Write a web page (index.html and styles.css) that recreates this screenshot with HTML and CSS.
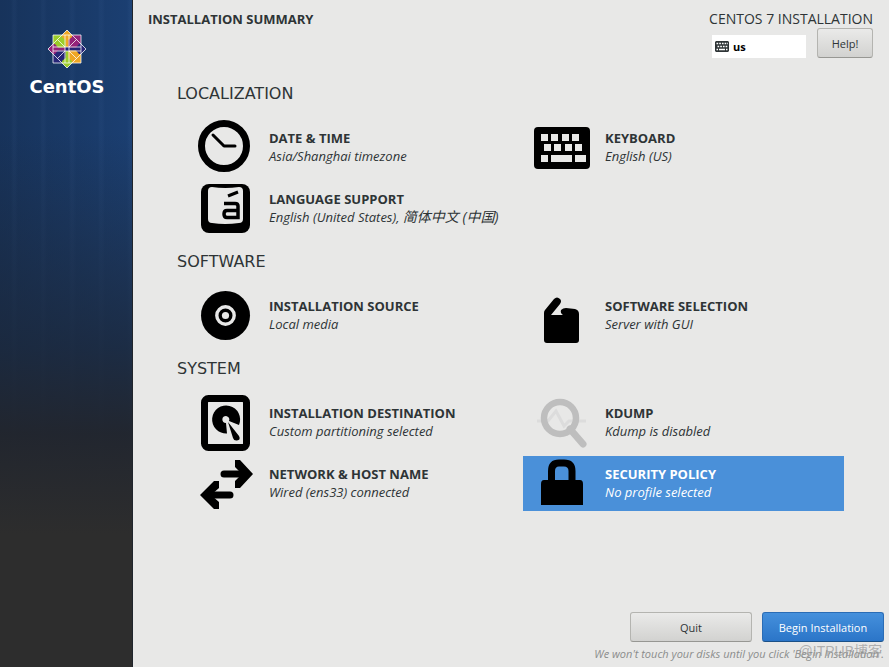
FILE: index.html
```html
<!DOCTYPE html>
<html lang="en">
<head>
<meta charset="utf-8">
<title>Installation Summary</title>
<link rel="stylesheet" href="styles.css">
</head>
<body>
<div class="installer">
  <aside class="sidebar">
    <svg class="logo-mark" viewBox="0 0 40 40" aria-hidden="true">
      <path fill="#9ccd2a" d="M6 6H20V20H6z"/>
      <path fill="#932279" d="M20 6H34V20H20z"/>
      <path fill="#efa724" d="M20 20H34V34H20z"/>
      <path fill="#262577" d="M6 20H20V34H6z"/>
      <path fill="#efa724" d="M20 1 25 6V8L21.500 11V18H18.500V11L15 8V6z"/>
      <path fill="#262577" d="M39 20 34 25H32L29 21.500H22V18.500H29L32 15H34z"/>
      <path fill="#9ccd2a" d="M20 39 15 34V32L18.500 29V22H21.500V29L25 32V34z"/>
      <path fill="#932279" d="M1 20 6 15H8L11 18.500H18V21.500H11L8 25H6z"/>
      <g fill="none" stroke="#fff" stroke-opacity=".85" stroke-width=".9">
        <path d="M6 6H34V34H6zM20 1 39 20 20 39 1 20z"/>
        <path d="M18 6V18H6M22 6V18H34M18 34V22H6M22 34V22H34"/>
        <path d="M10.500 10.500 18 18M29.500 10.500 22 18M10.500 29.500 18 22M29.500 29.500 22 22"/>
      </g>
      <path fill="#262577" stroke="#fff" stroke-width=".8" d="M18 18H22V22H18z"/>
    </svg>
    <span class="logo-name">CentOS</span>
  </aside>
  <main class="main">
    <header class="header">
      <h1>INSTALLATION SUMMARY</h1>
      <div class="header-side">
        <span class="product">CENTOS 7 INSTALLATION</span>
        <div class="header-tools">
          <button class="layout" type="button">
            <svg viewBox="0 0 14 11" aria-hidden="true"><path fill="#2e3436" d="M1 0H13L14 1V10L13 11H1L0 10V1z"/><path stroke="#fff" stroke-width="1.600" stroke-dasharray="1.700 1" d="M1.500 2.500H13M2.500 5.500H12.500"/><path stroke="#fff" stroke-width="1.600" d="M1.500 8.500H3M4 8.500H10M11 8.500H12.500"/></svg>
            us
          </button>
          <button class="btn help" type="button">Help!</button>
        </div>
      </div>
    </header>

    <div class="hub">
      <section>
        <h2>LOCALIZATION</h2>
        <div class="tiles">
          <button class="tile" type="button">
            <svg viewBox="0 0 64 56" aria-hidden="true"><circle cx="31" cy="26" r="22.500" fill="none" stroke="#000" stroke-width="7"/><path d="M20 15 31 26H42" fill="none" stroke="#000" stroke-width="3" stroke-linecap="round" stroke-linejoin="round"/></svg>
            <span class="label"><strong>DATE &amp; TIME</strong><em>Asia/Shanghai timezone</em></span>
          </button>
          <button class="tile" type="button">
            <svg viewBox="0 0 64 56" aria-hidden="true"><rect x="5" y="7" width="56" height="42" rx="4"/><path fill="#e8e8e7" d="M12 14h7v7h-7zM22 14h7v7h-7zM33 14h7v7h-7zM43 14h7v7h-7zM15 24h7v7h-7zM25 24h7v7h-7zM36 24h7v7h-7zM46 24h7v7h-7zM12 35h7v7h-7zM22 35h21v7H22zM46 35h11v7H46z"/></svg>
            <span class="label"><strong>KEYBOARD</strong><em>English (US)</em></span>
          </button>
          <button class="tile" type="button">
            <svg viewBox="0 0 64 56" aria-hidden="true"><rect x="8" y="3" width="49" height="49" rx="8"/><path fill="#e8e8e7" d="M19 6Q32 8 46 6Q50 6 50 10V38Q50 42 46 42Q32 44 19 42Q15 42 15 38V10Q15 6 19 6z"/><path d="M35 15 45 11" fill="none" stroke="#000" stroke-width="3"/><path d="M31 22.500H42Q45 22.500 45 25V36.500H34Q31 36.500 31 33Q31 29.500 34 29.500H45" fill="none" stroke="#000" stroke-width="3.500"/></svg>
            <span class="label"><strong>LANGUAGE SUPPORT</strong><em>English (United States), <span class="native" lang="zh-CN">简体中文 (中国)</span></em></span>
          </button>
        </div>
      </section>

      <section>
        <h2>SOFTWARE</h2>
        <div class="tiles">
          <button class="tile" type="button">
            <svg viewBox="0 0 64 56" aria-hidden="true"><circle cx="32.500" cy="27.500" r="24.500"/><circle cx="32.500" cy="27.500" r="8.700" fill="none" stroke="#e8e8e7" stroke-width="3.400"/><circle cx="32.500" cy="27.500" r="3.600" fill="#e8e8e7"/></svg>
            <span class="label"><strong>INSTALLATION SOURCE</strong><em>Local media</em></span>
          </button>
          <button class="tile" type="button">
            <svg viewBox="0 0 64 56" aria-hidden="true"><path d="M15 25Q15 23 16 22L25 11Q28 8 31 11Q33 13 31 16L22 27H34Q31 25 32 22Q34 20 37 20L46 21Q50 22 50 26V52Q50 55 47 55H18Q15 55 15 52z"/></svg>
            <span class="label"><strong>SOFTWARE SELECTION</strong><em>Server with GUI</em></span>
          </button>
        </div>
      </section>

      <section>
        <h2>SYSTEM</h2>
        <div class="tiles">
          <button class="tile" type="button">
            <svg viewBox="0 0 64 56" aria-hidden="true"><rect x="11.500" y="3.500" width="42" height="49" rx="4" fill="none" stroke="#000" stroke-width="7"/><path d="M34 38.500A14 14 0 1 1 46 30L36 26A3.500 3.500 0 1 0 33 28z"/><path d="M35 27 46 41Q48 45 44 45.500Q41 46 40 43z"/></svg>
            <span class="label"><strong>INSTALLATION DESTINATION</strong><em>Custom partitioning selected</em></span>
          </button>
          <button class="tile" type="button">
            <svg viewBox="0 0 64 56" aria-hidden="true"><path d="M8 26H19L27 16L35 31L40 26H57" fill="none" stroke="#dcdcdc" stroke-width="3"/><circle cx="31" cy="23" r="16" fill="none" stroke="#bebebe" stroke-width="6.500"/><path d="M41 34 54 49" stroke="#bebebe" stroke-width="7" stroke-linecap="round"/></svg>
            <span class="label"><strong>KDUMP</strong><em>Kdump is disabled</em></span>
          </button>
          <button class="tile" type="button">
            <svg viewBox="0 0 64 56" aria-hidden="true"><path d="M31 18H51M37 39H18" stroke="#000" stroke-width="7" stroke-linecap="round"/><path d="M42 4H47L60 18 47 32H42V25L49 18 42 11zM26 25H21L7 39 21 53H26V46L18 39 26 32z"/></svg>
            <span class="label"><strong>NETWORK &amp; HOST NAME</strong><em>Wired (ens33) connected</em></span>
          </button>
          <button class="tile selected" type="button">
            <svg viewBox="0 0 64 56" aria-hidden="true"><path d="M22.500 28V15Q22.500 7 30 7H35Q43 7 43 15V28" fill="none" stroke="#000" stroke-width="7"/><path d="M12 49V28Q12 24 15 24H51Q54 24 54 28V49z"/></svg>
            <span class="label"><strong>SECURITY POLICY</strong><em>No profile selected</em></span>
          </button>
        </div>
      </section>
    </div>

    <footer class="footer">
      <div class="actions">
        <button class="btn" type="button">Quit</button>
        <button class="btn primary" type="button">Begin Installation</button>
      </div>
      <p class="note">We won't touch your disks until you click 'Begin Installation'.</p>
      <span class="watermark">@ITPUB博客</span>
    </footer>
  </main>
</div>
</body>
</html>
```
FILE: styles.css
```css
* {
  box-sizing: border-box;
}

body {
  margin: 0;
  background: #e8e8e7;
  color: #2e3436;
  font-family: "Open Sans", "Noto Sans", "Noto Sans CJK SC", sans-serif;
  font-size: 13px;
}

button {
  font: inherit;
  color: inherit;
}

.installer {
  display: flex;
  min-height: 100vh;
}

.sidebar {
  flex: none;
  width: 133px;
  padding: 29px 0 0 2px;
  display: flex;
  flex-direction: column;
  align-items: center;
  border-right: 1px solid #20252c;
  background:
    linear-gradient(180deg, transparent 20%, rgba(28, 38, 54, 0.75) 52%, rgba(34, 37, 44, 0.95) 65%, #2d2d2d 80%),
    repeating-linear-gradient(90deg, transparent 0 11px, rgba(120, 160, 220, 0.04) 13px 15px, transparent 18px 29px),
    linear-gradient(90deg, #17335b, #1b3f72);
}

.logo-mark {
  width: 40px;
  height: 40px;
}

.logo-name {
  margin-top: 6px;
  color: #fff;
  font-family: "DejaVu Sans", sans-serif;
  font-size: 18px;
  font-weight: bold;
  line-height: 24px;
}

.main {
  flex: 1;
  min-width: 0;
  display: flex;
  flex-direction: column;
}

.header {
  display: flex;
  justify-content: space-between;
  padding: 10px 16px 0 15px;
}

.header h1 {
  margin: 0;
  font-size: 13px;
  font-weight: 700;
  line-height: 18px;
}

.header-side {
  display: flex;
  flex-direction: column;
}

.product {
  font-size: 14px;
  line-height: 18px;
}

.header-tools {
  display: flex;
  justify-content: flex-end;
  align-items: flex-end;
  gap: 11px;
}

.layout {
  display: flex;
  align-items: center;
  gap: 4px;
  width: 94px;
  height: 23px;
  padding: 0 3px;
  border: 0;
  background: #fff;
  color: #000;
  font-size: 11px;
  font-weight: bold;
}

.layout svg {
  width: 14px;
  height: 11px;
}

.btn {
  width: 122px;
  height: 30px;
  padding: 0;
  border: 1px solid #b4b4b0;
  border-bottom-color: #979793;
  border-radius: 3px;
  background: linear-gradient(#eaeae9, #d2d2d0);
  font-size: 11px;
}

.btn.help {
  width: 56px;
}

.btn.primary {
  border-color: #2a6cb5;
  border-bottom-color: #1c5187;
  background: linear-gradient(#4590dc, #2b75c8);
  color: #fff;
}

.hub {
  flex: 1;
  display: flex;
  flex-direction: column;
  gap: 14px;
  padding: 24px 45px 0 44px;
}

.hub h2 {
  margin: 0 0 14px;
  font-family: "DejaVu Sans", sans-serif;
  font-size: 16px;
  font-weight: 400;
  line-height: 24px;
}

.tiles {
  display: grid;
  grid-template-columns: 1fr 1fr;
  gap: 6px 15px;
  padding-left: 10px;
}

.tile {
  display: flex;
  align-items: center;
  gap: 12px;
  min-width: 0;
  height: 55px;
  padding: 0 6px;
  border: 0;
  background: transparent;
  text-align: left;
}

.tile svg {
  flex: none;
  width: 64px;
  height: 56px;
}

.tile.selected {
  background: #4a90d9;
  color: #fff;
}

.label {
  display: flex;
  flex-direction: column;
  padding-bottom: 2px;
  white-space: nowrap;
}

.label strong {
  font-weight: 700;
  line-height: 18px;
}

.label em {
  line-height: 18px;
}

.native {
  font-size: 14px;
}

.footer {
  position: relative;
  padding: 0 5px 4px;
}

.actions {
  display: flex;
  justify-content: flex-end;
  gap: 10px;
}

.note {
  margin: 3px 0 0;
  color: #8b8d8c;
  font-size: 11px;
  font-style: italic;
  line-height: 18px;
  text-align: right;
}

.watermark {
  position: absolute;
  right: 7px;
  bottom: 7px;
  color: rgba(150, 150, 150, 0.7);
  font-family: "Liberation Sans", "Noto Sans CJK SC", sans-serif;
  font-size: 14px;
  line-height: 18px;
}
```
